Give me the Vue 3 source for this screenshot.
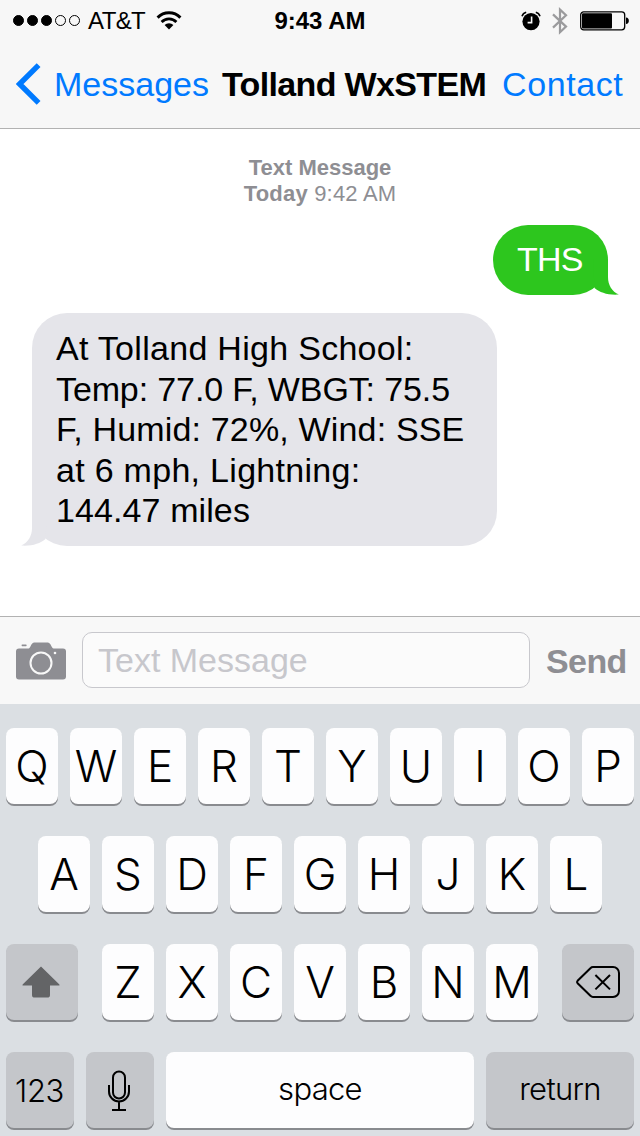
<script setup>
import { ref } from 'vue'

const draft = ref('')

const signal = [true, true, true, false, false]

const message_lines = [
  'At Tolland High School:',
  'Temp: 77.0 F, WBGT: 75.5',
  'F, Humid: 72%, Wind: SSE',
  'at 6 mph, Lightning:',
  '144.47 miles',
]

const row_one = 'QWERTYUIOP'.split('')
const row_two = 'ASDFGHJKL'.split('')
const row_three = 'ZXCVBNM'.split('')
</script>

<template>
  <div class="phone">
    <header class="top">
      <div class="status">
        <div class="status_left">
          <div class="dots">
            <span v-for="(on, i) in signal" :key="i" class="dot" :class="{ on }"></span>
          </div>
          <span class="carrier">AT&amp;T</span>
          <svg class="wifi" width="26" height="19" viewBox="0 0 26 19">
            <path d="M1.6 6.6A16 16 0 0 1 24.4 6.6" fill="none" stroke="#000" stroke-width="3" />
            <path d="M5.6 11A10.4 10.4 0 0 1 20.4 11" fill="none" stroke="#000" stroke-width="2.8" />
            <path d="M8.6 14A6.2 6.2 0 0 1 17.4 14L13 18.4Z" />
          </svg>
        </div>
        <div class="clock">9:43 AM</div>
        <div class="status_right">
          <svg class="alarm" width="20" height="20" viewBox="0 0 20 20">
            <circle cx="10" cy="10.6" r="8.6" />
            <path d="M1 5.2A6 6 0 0 1 5.2 1.2M19 5.2A6 6 0 0 0 14.8 1.2" fill="none" stroke="#000" stroke-width="1.6" />
            <path d="M10.6 5.5V11.6H6.6" fill="none" stroke="#f7f7f7" stroke-width="1.6" />
          </svg>
          <svg class="bluetooth" width="16" height="28" viewBox="0 0 16 28">
            <path d="M1 7.4L14 19.6L8 25.2V2.6L14 8.2L1 20.6" fill="none" stroke="#9b9b9d" stroke-width="2.2" />
          </svg>
          <svg class="battery" width="50" height="20" viewBox="0 0 50 20">
            <rect x="0.7" y="0.8" width="44" height="18" rx="3" fill="none" stroke="#000" stroke-width="1.3" />
            <rect x="2" y="2.2" width="30" height="15.2" rx="1" />
            <path d="M46 6.6C49.8 6.6 49.8 13 46 13Z" />
          </svg>
        </div>
      </div>
      <nav class="nav">
        <a class="back">
          <svg width="26" height="42" viewBox="0 0 26 42">
            <path d="M22.6 2.2L3.6 21L22.6 39.8" fill="none" stroke="#007aff" stroke-width="5.4" />
          </svg>
          <span>Messages</span>
        </a>
        <h1 class="title">Tolland WxSTEM</h1>
        <a class="contact">Contact</a>
      </nav>
    </header>

    <main class="thread">
      <div class="stamp">
        <div class="stamp_kind">Text Message</div>
        <div class="stamp_time"><b>Today</b> 9:42 AM</div>
      </div>
      <div class="bubble sent">
        THS
        <svg class="tail" width="26" height="36" viewBox="0 0 26 36">
          <path d="M0 0H15V18C15 26 19 32.500 25.800 35.600C15 36.400 7 33.500 1.500 29Z" fill="#2dc61e" />
        </svg>
      </div>
      <div class="bubble received">
        <div v-for="(line, i) in message_lines" :key="i" :class="'line_' + i">{{ line }}</div>
        <svg class="tail" width="26" height="36" viewBox="0 0 26 36">
          <path d="M26 0H11V18C11 26 7 32.500 0.200 35.600C11 36.400 19 33.500 24.500 29Z" fill="#e5e5ea" />
        </svg>
      </div>
    </main>

    <div class="compose">
      <svg class="camera" width="50" height="38" viewBox="0 0 50 38">
        <path d="M3 6.5H12C14 6.5 14.4 4 15.6 2.2C16.4 0.9 17.4 0.4 19 0.4H31C32.6 0.4 33.6 0.9 34.4 2.2C35.6 4 36 6.5 38.4 6.5H47A3 3 0 0 1 50 9.5V34.4A3 3 0 0 1 47 37.4H3A3 3 0 0 1 0 34.4V9.5A3 3 0 0 1 3 6.5Z" fill="#8e8e93" />
        <rect x="5.6" y="2.4" width="5" height="1.8" rx="0.6" fill="#8e8e93" />
        <circle cx="25" cy="21" r="10.5" fill="none" stroke="#f8f8f8" stroke-width="2" />
        <circle cx="39" cy="11" r="1.3" fill="#f8f8f8" />
      </svg>
      <input v-model="draft" class="field" type="text" placeholder="Text Message" />
      <button class="send">Send</button>
    </div>

    <div class="keyboard">
      <div class="row">
        <button v-for="k in row_one" :key="k" class="key">{{ k }}</button>
      </div>
      <div class="row">
        <button v-for="k in row_two" :key="k" class="key">{{ k }}</button>
      </div>
      <div class="row spread">
        <button class="key dark wide shift">
          <svg width="38" height="32" viewBox="0 0 38 32">
            <path d="M19 0.4L37.4 18.4Q38 19.6 36.6 19.6H28V28.4A3 3 0 0 1 25 31.6H13A3 3 0 0 1 10 28.4V19.6H1.4Q0 19.6 0.6 18.4Z" fill="#636466" />
          </svg>
        </button>
        <div class="letters">
          <button v-for="k in row_three" :key="k" class="key">{{ k }}</button>
        </div>
        <button class="key dark wide">
          <svg width="44" height="32" viewBox="0 0 44 32" fill="none" stroke="#000" stroke-width="2">
            <path d="M17 1H37A6 6 0 0 1 43 7V25A6 6 0 0 1 37 31H17Q15.600 31 14.400 29.800L1.600 17.200Q0.600 16 1.600 14.800L14.400 2.200Q15.600 1 17 1Z" />
            <path d="M19.400 9L34 23.400M34 9L19.400 23.400" />
          </svg>
        </button>
      </div>
      <div class="row">
        <button class="key dark small numbers">123</button>
        <button class="key dark small mic">
          <svg width="24" height="42" viewBox="0 0 24 42" fill="none" stroke="#000" stroke-width="2">
            <rect x="6" y="1.500" width="12" height="27" rx="6" />
            <path d="M2 15V21.500A10 10 0 0 0 22 21.500V15M12 31.500V40M5 40H19" />
          </svg>
        </button>
        <button class="key space">space</button>
        <button class="key dark return">return</button>
      </div>
    </div>
  </div>
</template>

<style>
body {
  margin: 0;
  background: #fff;
}
</style>

<style scoped>
.phone {
  width: 640px;
  height: 1136px;
  display: flex;
  flex-direction: column;
  overflow: hidden;
  font-family: "Liberation Sans", Arial, sans-serif;
  color: #000;
}

svg {
  display: block;
  flex: none;
}

button {
  border: 0;
  padding: 0;
  margin: 0;
  font-family: inherit;
}

/* status bar and navigation */
.top {
  height: 128px;
  background: #f7f7f7;
  border-bottom: 1px solid #b2b2b2;
}

.status {
  height: 41px;
  display: grid;
  grid-template-columns: 1fr auto 1fr;
  align-items: center;
}

.status_left {
  display: flex;
  align-items: center;
  padding-left: 13px;
}

.dots {
  display: flex;
  gap: 3px;
}

.dot {
  width: 11px;
  height: 11px;
  box-sizing: border-box;
  border: 1px solid #000;
  border-radius: 50%;
}

.dot.on {
  background: #000;
}

.carrier {
  margin-left: 8px;
  width: 58px;
  font-size: 24px;
  letter-spacing: -0.6px;
  white-space: nowrap;
}

.wifi {
  margin-left: 10px;
}

.clock {
  font-size: 24px;
  font-weight: bold;
}

.status_right {
  display: flex;
  justify-content: flex-end;
  align-items: center;
  padding-right: 10px;
}

.bluetooth {
  margin: 0 12px 0 11px;
}

.nav {
  height: 86px;
  display: flex;
  align-items: center;
  font-size: 34px;
  line-height: 40px;
  white-space: nowrap;
}

.back {
  display: flex;
  align-items: center;
  width: 206px;
  padding-left: 16px;
  color: #007aff;
}

.back span {
  margin-left: 12px;
}

.title {
  width: 280px;
  margin: 0;
  font-size: 34px;
  letter-spacing: -0.65px;
}

.contact {
  color: #007aff;
  letter-spacing: 0.6px;
}

/* conversation */
.thread {
  flex: 1;
  display: flex;
  flex-direction: column;
}

.stamp {
  margin-top: 26px;
  text-align: center;
  font-size: 22px;
  line-height: 26px;
  color: #8e8e93;
}

.stamp_kind {
  font-weight: bold;
}

.stamp_time {
  letter-spacing: 0.2px;
}

.bubble {
  position: relative;
  box-sizing: border-box;
  font-size: 34px;
  line-height: 40.5px;
  white-space: nowrap;
}

.sent {
  align-self: flex-end;
  width: 115px;
  height: 70px;
  margin: 18px 32px 0 0;
  padding: 14px 24px;
  border-radius: 35px;
  background: #2dc61e;
  color: #fff;
  letter-spacing: -0.8px;
}

.received {
  width: 465px;
  height: 233px;
  margin: 18px 0 0 32px;
  padding: 15px 24px;
  border-radius: 35px;
  background: #e5e5ea;
}

.line_0,
.line_3 {
  letter-spacing: 0.29px;
}

.line_1 {
  letter-spacing: -0.12px;
}

.line_2 {
  letter-spacing: 0.17px;
}

.line_4 {
  letter-spacing: 0.1px;
}

.tail {
  position: absolute;
  bottom: 0;
}

.sent .tail {
  right: -11px;
}

.received .tail {
  left: -11px;
}

/* compose bar */
.compose {
  height: 88px;
  box-sizing: border-box;
  flex: none;
  border-top: 1px solid #b2b2b2;
  background: #f8f8f8;
  display: flex;
  align-items: center;
  padding-bottom: 1px;
}

.camera {
  margin-left: 16px;
  padding-top: 2px;
}

.field {
  box-sizing: border-box;
  width: 448px;
  height: 56px;
  margin-left: 16px;
  padding: 0 15px;
  border: 1px solid #c8c8cd;
  border-radius: 10px;
  background: #fbfbfb;
  font-family: inherit;
  font-size: 34px;
  outline: none;
}

.field::placeholder {
  color: #c7c7cc;
  opacity: 1;
}

.send {
  margin-left: 16px;
  padding-top: 2px;
  background: none;
  font-size: 34px;
  font-weight: bold;
  letter-spacing: -0.6px;
  color: #8e8e93;
}

/* keyboard */
.keyboard {
  height: 432px;
  box-sizing: border-box;
  padding: 24px 6px 0;
  display: flex;
  flex-direction: column;
  gap: 32px;
  background: #dbdfe3;
}

.row,
.letters {
  display: flex;
  justify-content: center;
  gap: 12px;
}

.row.spread {
  justify-content: space-between;
}

.key {
  width: 52px;
  height: 76px;
  box-sizing: border-box;
  display: flex;
  align-items: center;
  justify-content: center;
  border-radius: 8px;
  background: #fdfdfe;
  box-shadow: 0 2px 0 #898b8f;
  font-family: Inter, sans-serif;
  font-weight: 300;
  font-size: 44px;
  color: #000;
}

.key.dark {
  background: #c4c6ca;
}

.key.wide {
  width: 72px;
}

.key.small {
  width: 68px;
}

.key.shift {
  padding-right: 2px;
}

.key.mic {
  padding: 2px 2px 0 0;
}

.key.space,
.key.return {
  width: 308px;
  padding-bottom: 4px;
  font-size: 31px;
  letter-spacing: -0.7px;
}

.key.return {
  width: 148px;
}

.key.numbers {
  padding-right: 1px;
  font-size: 31px;
  letter-spacing: -0.4px;
}
</style>
